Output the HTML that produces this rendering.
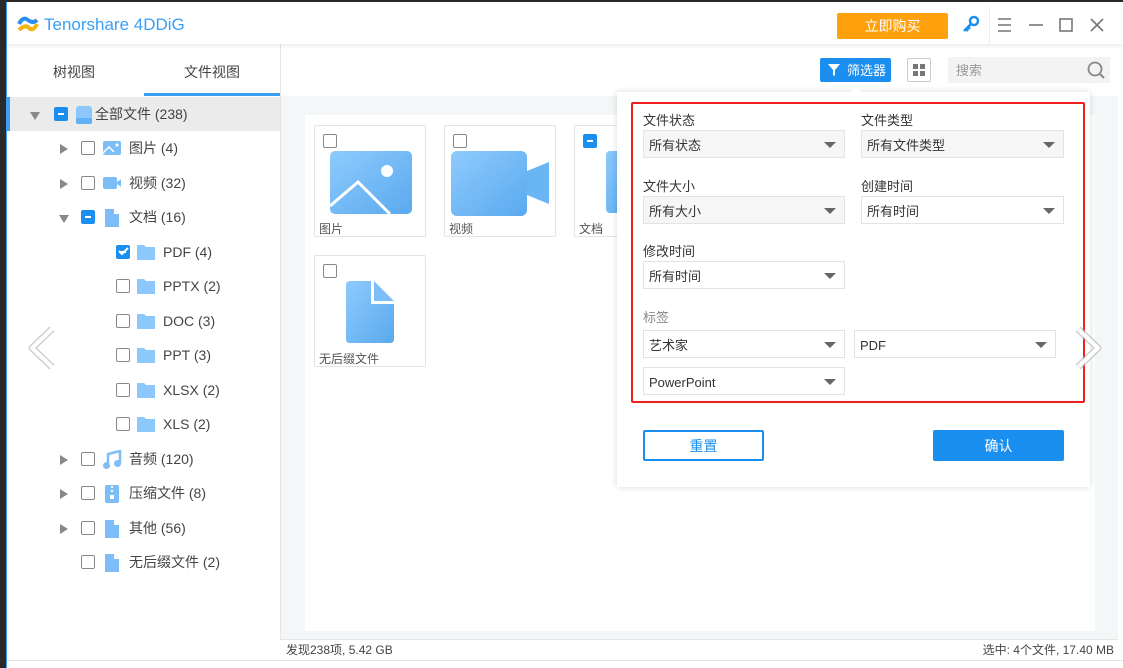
<!DOCTYPE html>
<html><head><meta charset="utf-8"><style>
*{box-sizing:border-box;margin:0;padding:0}
body{width:1123px;height:668px;overflow:hidden;background:#fff;font-family:"Liberation Sans","Noto Sans CJK SC",sans-serif;position:relative;color:#333}
.abs{position:absolute}
.dd{position:absolute;height:28px;border:1px solid #e3e3e3;background:#f6f6f6;font-size:13px;line-height:29px;padding-left:5px;color:#333}
.dd.w{background:#fff}
.dd:after{content:"";position:absolute;right:8px;top:11px;border-left:6px solid transparent;border-right:6px solid transparent;border-top:6px solid #666}
.lbl{position:absolute;font-size:13px;color:#333}
.row{position:absolute;left:7px;width:273px;height:34px;font-size:14px;color:#444;line-height:34px}
.cb{position:absolute;width:14px;height:14px;border:1px solid #888;border-radius:2px;background:#fff;top:10px}
.cb.m{background:#1b8ff0;border-color:#1b8ff0}
.cb.m:after{content:"";position:absolute;left:3px;top:5px;width:6px;height:2px;background:#fff}
.tri{position:absolute;top:13px;border-top:5px solid transparent;border-bottom:5px solid transparent;border-left:8px solid #888}
.trd{position:absolute;top:15px;border-left:5px solid transparent;border-right:5px solid transparent;border-top:8px solid #888}
.ic{position:absolute;top:8px}
.card{position:absolute;width:112px;height:112px;border:1px solid #e4e4e4;border-radius:2px;background:#fff}
.card .cb{left:8px;top:8px}
.card .t{position:absolute;left:4px;top:94px;font-size:12px;color:#555}
</style></head><body>
<div class="abs" style="left:0;top:0;width:6px;height:668px;background:#2a2a2a"></div>
<div class="abs" style="left:0;top:0;width:1123px;height:2px;background:#2a2a2a"></div>
<div class="abs" style="left:6px;top:2px;width:1px;height:666px;background:#3a9ff5"></div>
<!-- title bar -->
<div class="abs" style="left:7px;top:2px;width:1116px;height:42px;background:#fff;box-shadow:0 2px 4px rgba(0,0,0,.08);z-index:2">
<svg class="abs" style="left:10px;top:12px" width="22" height="20" viewBox="0 0 22 20"><path d="M2 10 Q6 2 11 6 T20 6" stroke="#2a8ff0" stroke-width="4" fill="none"/><path d="M2 16 Q8 10 12 14 T20 10" stroke="#f5b50f" stroke-width="4" fill="none"/></svg>
<div class="abs" style="left:37px;top:13px;font-size:17px;color:#3a9ff5">Tenorshare 4DDiG</div>
<div class="abs" style="left:830px;top:11px;width:111px;height:26px;background:#ffa10d;border-radius:2px;color:#fff;font-size:14px;text-align:center;line-height:26px">立即购买</div>
<svg class="abs" style="left:955px;top:13px" width="18" height="18"><circle cx="12" cy="6" r="4" stroke="#1b8ff0" stroke-width="2.5" fill="none"/><path d="M9 9 L2 16 M4 14 L6 16 M6 12 L8 14" stroke="#1b8ff0" stroke-width="2.5"/></svg>
<div class="abs" style="left:982px;top:4px;width:1px;height:38px;background:#eee"></div>
<svg class="abs" style="left:990px;top:15px" width="120" height="16"><path d="M1 2H14M1 8H14M1 14H14" stroke="#777" stroke-width="1.6"/><path d="M32 8H46" stroke="#777" stroke-width="1.6"/><rect x="63" y="2" width="12" height="12" stroke="#777" stroke-width="1.6" fill="none"/><path d="M94 2L106 14M106 2L94 14" stroke="#777" stroke-width="1.6"/></svg>
</div>
<!-- sidebar -->
<div class="abs" style="left:280px;top:44px;width:1px;height:596px;background:#e5e5e5"></div>
<div class="abs" style="left:7px;top:44px;width:273px;height:52px;font-size:14px;color:#444">
<div class="abs" style="left:46px;top:18px">树视图</div>
<div class="abs" style="left:177px;top:18px">文件视图</div>
<div class="abs" style="left:137px;top:49px;width:136px;height:3px;background:#3a9ff5"></div>
</div>
<div class="row" style="top:97px;background:#ebebeb;border-left:3px solid #3a9ff5"><div class="trd" style="left:20px"></div><div class="cb m" style="left:44px"></div>
<svg class="ic" style="left:64px" width="20" height="20"><rect x="2" y="1" width="16" height="18" rx="3" fill="#8cc8fb"/><rect x="2" y="13" width="16" height="6" rx="2" fill="#5fb0f5"/></svg><span class="abs" style="left:85px">全部文件 (238)</span></div>
<div class="row" style="top:131px"><div class="tri" style="left:53px"></div><div class="cb" style="left:74px"></div><svg class="ic" style="left:95px" width="20" height="18"><rect x="1" y="2" width="18" height="14" rx="2" fill="#7ebef8"/><path d="M1 14L7 8L12 13" stroke="#fff" stroke-width="1.5" fill="none"/><circle cx="15" cy="6" r="1.5" fill="#fff"/></svg><span class="abs" style="left:122px">图片 (4)</span></div>
<div class="row" style="top:166px"><div class="tri" style="left:53px"></div><div class="cb" style="left:74px"></div><svg class="ic" style="left:95px" width="20" height="18"><rect x="1" y="3" width="14" height="12" rx="2" fill="#7ebef8"/><path d="M15 8L19 5V13L15 10Z" fill="#7ebef8"/></svg><span class="abs" style="left:122px">视频 (32)</span></div>
<div class="row" style="top:200px"><div class="trd" style="left:52px"></div><div class="cb m" style="left:74px"></div><svg class="ic" style="left:97px" width="16" height="20"><path d="M1 1H10L15 6V19H1Z" fill="#7ebef8"/><path d="M10 1V6H15" fill="#fff"/></svg><span class="abs" style="left:122px">文档 (16)</span></div>
<div class="row" style="top:235px"><div class="cb m" style="left:109px"></div><svg class="abs" style="left:111px;top:12px" width="11" height="9"><path d="M1 4L4 7L10 1" stroke="#fff" stroke-width="2" fill="none"/></svg><svg class="ic" style="left:129px" width="20" height="18"><path d="M1 2H8L10 4H19V17H1Z" fill="#8cc8fb"/></svg><span class="abs" style="left:156px">PDF (4)</span></div>
<div class="row" style="top:269px"><div class="cb" style="left:109px"></div><svg class="ic" style="left:129px" width="20" height="18"><path d="M1 2H8L10 4H19V17H1Z" fill="#8cc8fb"/></svg><span class="abs" style="left:156px">PPTX (2)</span></div>
<div class="row" style="top:304px"><div class="cb" style="left:109px"></div><svg class="ic" style="left:129px" width="20" height="18"><path d="M1 2H8L10 4H19V17H1Z" fill="#8cc8fb"/></svg><span class="abs" style="left:156px">DOC (3)</span></div>
<div class="row" style="top:338px"><div class="cb" style="left:109px"></div><svg class="ic" style="left:129px" width="20" height="18"><path d="M1 2H8L10 4H19V17H1Z" fill="#8cc8fb"/></svg><span class="abs" style="left:156px">PPT (3)</span></div>
<div class="row" style="top:373px"><div class="cb" style="left:109px"></div><svg class="ic" style="left:129px" width="20" height="18"><path d="M1 2H8L10 4H19V17H1Z" fill="#8cc8fb"/></svg><span class="abs" style="left:156px">XLSX (2)</span></div>
<div class="row" style="top:407px"><div class="cb" style="left:109px"></div><svg class="ic" style="left:129px" width="20" height="18"><path d="M1 2H8L10 4H19V17H1Z" fill="#8cc8fb"/></svg><span class="abs" style="left:156px">XLS (2)</span></div>
<div class="row" style="top:442px"><div class="tri" style="left:53px"></div><div class="cb" style="left:74px"></div><svg class="ic" style="left:95px" width="20" height="20"><path d="M6 15V4L18 1V13" stroke="#7ebef8" stroke-width="2.5" fill="none"/><circle cx="4.5" cy="15.5" r="3.5" fill="#7ebef8"/><circle cx="15.5" cy="13.5" r="3.5" fill="#7ebef8"/></svg><span class="abs" style="left:122px">音频 (120)</span></div>
<div class="row" style="top:476px"><div class="tri" style="left:53px"></div><div class="cb" style="left:74px"></div><svg class="ic" style="left:97px" width="16" height="20"><rect x="1" y="1" width="14" height="18" rx="2" fill="#7ebef8"/><path d="M8 2V10" stroke="#fff" stroke-width="2" stroke-dasharray="2 2"/><rect x="6" y="11" width="4" height="4" fill="#fff"/></svg><span class="abs" style="left:122px">压缩文件 (8)</span></div>
<div class="row" style="top:511px"><div class="tri" style="left:53px"></div><div class="cb" style="left:74px"></div><svg class="ic" style="left:97px" width="16" height="20"><path d="M1 1H10L15 6V19H1Z" fill="#7ebef8"/><path d="M10 1V6H15" fill="#fff"/></svg><span class="abs" style="left:122px">其他 (56)</span></div>
<div class="row" style="top:545px"><div class="cb" style="left:74px"></div><svg class="ic" style="left:97px" width="16" height="20"><path d="M1 1H10L15 6V19H1Z" fill="#7ebef8"/><path d="M10 1V6H15" fill="#fff"/></svg><span class="abs" style="left:122px">无后缀文件 (2)</span></div>
<div class="abs" style="left:7px;top:660px;width:1116px;height:1px;background:#e5e5e5"></div>
<!-- main -->
<div class="abs" style="left:281px;top:96px;width:837px;height:544px;background:#f3f7f7"></div>
<div class="abs" style="left:305px;top:115px;width:790px;height:516px;background:#fff"></div>
<div class="abs" style="left:820px;top:58px;width:71px;height:24px;background:#1b8ff0;border-radius:2px;color:#fff;font-size:13px;line-height:25px"><svg class="abs" style="left:8px;top:6px" width="12" height="12"><path d="M0 0H12L7 6V12L5 11V6Z" fill="#fff"/></svg><span class="abs" style="left:27px">筛选器</span></div>
<div class="abs" style="left:907px;top:58px;width:24px;height:24px;border:1px solid #ccc;border-radius:2px"><svg class="abs" style="left:5px;top:5px" width="12" height="12"><rect x="0" y="0" width="5" height="5" fill="#777"/><rect x="7" y="0" width="5" height="5" fill="#777"/><rect x="0" y="7" width="5" height="5" fill="#777"/><rect x="7" y="7" width="5" height="5" fill="#777"/></svg></div>
<div class="abs" style="left:948px;top:57px;width:162px;height:26px;background:#f3f3f3;font-size:13px;color:#999;line-height:28px;padding-left:8px">搜索<svg class="abs" style="left:139px;top:4px" width="18" height="18"><circle cx="8" cy="8" r="6.5" stroke="#888" stroke-width="1.8" fill="none"/><path d="M13 13L17 17" stroke="#888" stroke-width="2"/></svg></div>
<div class="card" style="left:314px;top:125px"><div class="cb"></div><svg class="abs" style="left:15px;top:25px" width="82" height="64"><defs><linearGradient id="g" x1="0" y1="0" x2="1" y2="1"><stop offset="0" stop-color="#8ecbfd"/><stop offset="1" stop-color="#5aa9ee"/></linearGradient></defs><rect x="0" y="0" width="82" height="63" rx="5" fill="url(#g)"/><path d="M0 55L28 31L60 63" stroke="#fff" stroke-width="3" fill="none"/><circle cx="57" cy="20" r="6" fill="#fff"/></svg><div class="t">图片</div></div>
<div class="card" style="left:444px;top:125px"><div class="cb"></div><svg class="abs" style="left:6px;top:25px" width="100" height="66"><rect x="0" y="0" width="76" height="65" rx="6" fill="url(#g)"/><path d="M76 20L98 11V53L76 44Z" fill="#6ab5f3"/></svg><div class="t">视频</div></div>
<div class="card" style="left:574px;top:125px;width:60px;border-right:none"><div class="cb m"></div><svg class="abs" style="left:31px;top:25px" width="20" height="62"><rect x="0" y="0" width="20" height="62" rx="4" fill="url(#g)"/></svg><div class="t">文档</div></div>
<div class="card" style="left:314px;top:255px"><div class="cb"></div><svg class="abs" style="left:31px;top:25px" width="50" height="62"><path d="M0 4Q0 0 4 0H25V23H48V58Q48 62 44 62H4Q0 62 0 58Z" fill="url(#g)"/><path d="M28 0L48 20H28Z" fill="#7ebef8"/></svg><div class="t">无后缀文件</div></div>
<!-- status -->
<div class="abs" style="left:281px;top:639px;width:837px;height:21px;border-top:1px solid #e5e5e5;background:#fff;font-size:12px;color:#444;line-height:21px"><span class="abs" style="left:5px">发现238项, 5.42 GB</span><span class="abs" style="right:4px">选中: 4个文件, 17.40 MB</span></div>
<!-- arrows -->
<svg class="abs" style="left:24px;top:325px" width="34" height="46"><path d="M28 4L8 23L28 42" stroke="#bbb" stroke-width="7" fill="none" stroke-linejoin="round" opacity=".7"/><path d="M28 4L8 23L28 42" stroke="#fff" stroke-width="4" fill="none" stroke-linejoin="round"/></svg>
<!-- popup -->
<div class="abs" style="left:617px;top:92px;width:473px;height:395px;background:#fff;box-shadow:0 0 6px rgba(0,0,0,.15)"></div>
<div class="abs" style="left:849px;top:86px;border-left:7px solid transparent;border-right:7px solid transparent;border-bottom:7px solid #fff"></div>
<div class="abs" style="left:631px;top:102px;width:454px;height:301px;border:2px solid #f0201e;border-radius:2px"></div>
<div class="lbl" style="left:643px;top:110px">文件状态</div><div class="lbl" style="left:861px;top:110px">文件类型</div>
<div class="dd" style="left:643px;top:130px;width:202px">所有状态</div><div class="dd" style="left:861px;top:130px;width:203px">所有文件类型</div>
<div class="lbl" style="left:643px;top:176px">文件大小</div><div class="lbl" style="left:861px;top:176px">创建时间</div>
<div class="dd" style="left:643px;top:196px;width:202px">所有大小</div><div class="dd w" style="left:861px;top:196px;width:203px">所有时间</div>
<div class="lbl" style="left:643px;top:241px">修改时间</div>
<div class="dd w" style="left:643px;top:261px;width:202px">所有时间</div>
<div class="lbl" style="left:643px;top:307px;color:#888">标签</div>
<div class="dd w" style="left:643px;top:330px;width:202px">艺术家</div><div class="dd w" style="left:854px;top:330px;width:202px">PDF</div>
<div class="dd w" style="left:643px;top:367px;width:202px">PowerPoint</div>
<div class="abs" style="left:643px;top:430px;width:121px;height:31px;border:2px solid #1b8ff0;border-radius:2px;color:#1b8ff0;font-size:14px;text-align:center;line-height:29px">重置</div>
<div class="abs" style="left:933px;top:430px;width:131px;height:31px;background:#1b8ff0;border-radius:2px;color:#fff;font-size:14px;text-align:center;line-height:32px">确认</div>
<svg class="abs" style="left:1072px;top:325px" width="34" height="46"><path d="M6 4L26 23L6 42" stroke="#bbb" stroke-width="7" fill="none" stroke-linejoin="round" opacity=".7"/><path d="M6 4L26 23L6 42" stroke="#fff" stroke-width="4" fill="none" stroke-linejoin="round"/></svg>
</body></html>
